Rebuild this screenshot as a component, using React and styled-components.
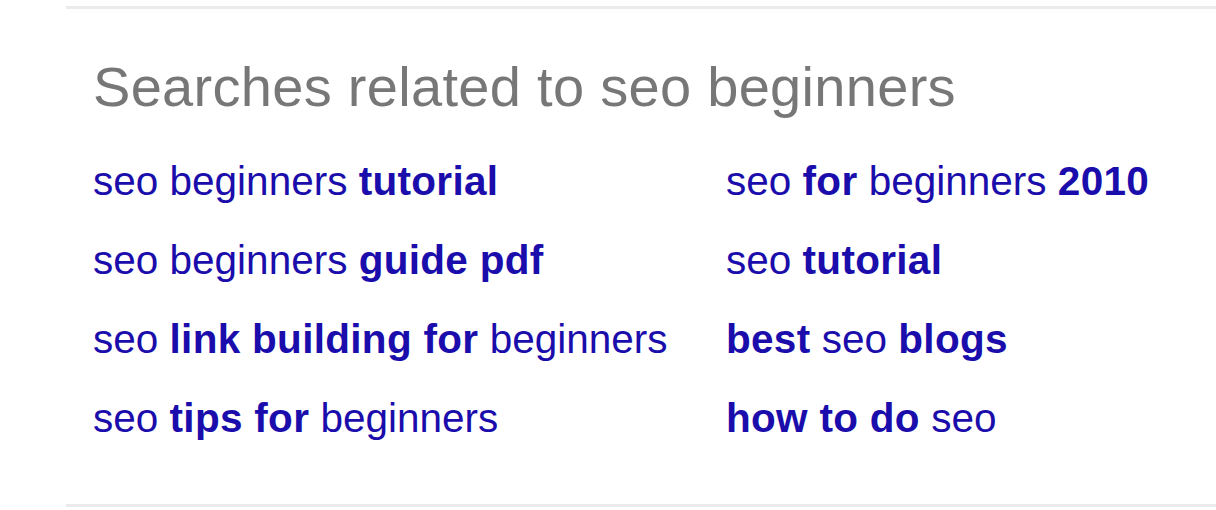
import React from 'react';
import styled, { createGlobalStyle } from 'styled-components';

const GlobalStyle = createGlobalStyle`
  body {
    margin: 0;
    background: #fff;
    font-family: "Liberation Sans", Arial, sans-serif;
  }
`;

const Page = styled.div`
  padding-top: 6px;
  padding-left: 66px;
`;

const Section = styled.div`
  border-top: 3px solid #ebebeb;
  border-bottom: 3px solid #ebebeb;
  padding: 50px 0 46px 27px;
`;

const Heading = styled.h3`
  margin: 0 0 27px;
  font-size: 56px;
  line-height: 56px;
  letter-spacing: 0.3px;
  font-weight: normal;
  color: #777;
`;

const Grid = styled.div`
  display: grid;
  grid-template-columns: 633px auto;
`;

const Link = styled.a`
  display: block;
  font-size: 40.5px;
  line-height: 79px;
  color: #1a0dab;
  text-decoration: none;
  white-space: nowrap;

  b {
    font-weight: bold;
    letter-spacing: 0.3px;
  }
`;

const rows = [
  [['seo beginners ', ''], ['', 'tutorial']],
  [['seo ', ''], ['', 'for'], [' beginners ', ''], ['', '2010']],
  [['seo beginners ', ''], ['', 'guide pdf']],
  [['seo ', ''], ['', 'tutorial']],
  [['seo ', ''], ['', 'link building for'], [' beginners', '']],
  [['', 'best'], [' seo ', ''], ['', 'blogs']],
  [['seo ', ''], ['', 'tips for'], [' beginners', '']],
  [['', 'how to do'], [' seo', '']],
];

const App = () => (
  <Page>
    <GlobalStyle />
    <Section>
      <Heading>Searches related to seo beginners</Heading>
      <Grid>
        {rows.map((parts, i) => (
          <Link key={i} href="#">
            {parts.map(([plain, bold], j) =>
              bold ? <b key={j}>{bold}</b> : <span key={j}>{plain}</span>
            )}
          </Link>
        ))}
      </Grid>
    </Section>
  </Page>
);

export default App;
